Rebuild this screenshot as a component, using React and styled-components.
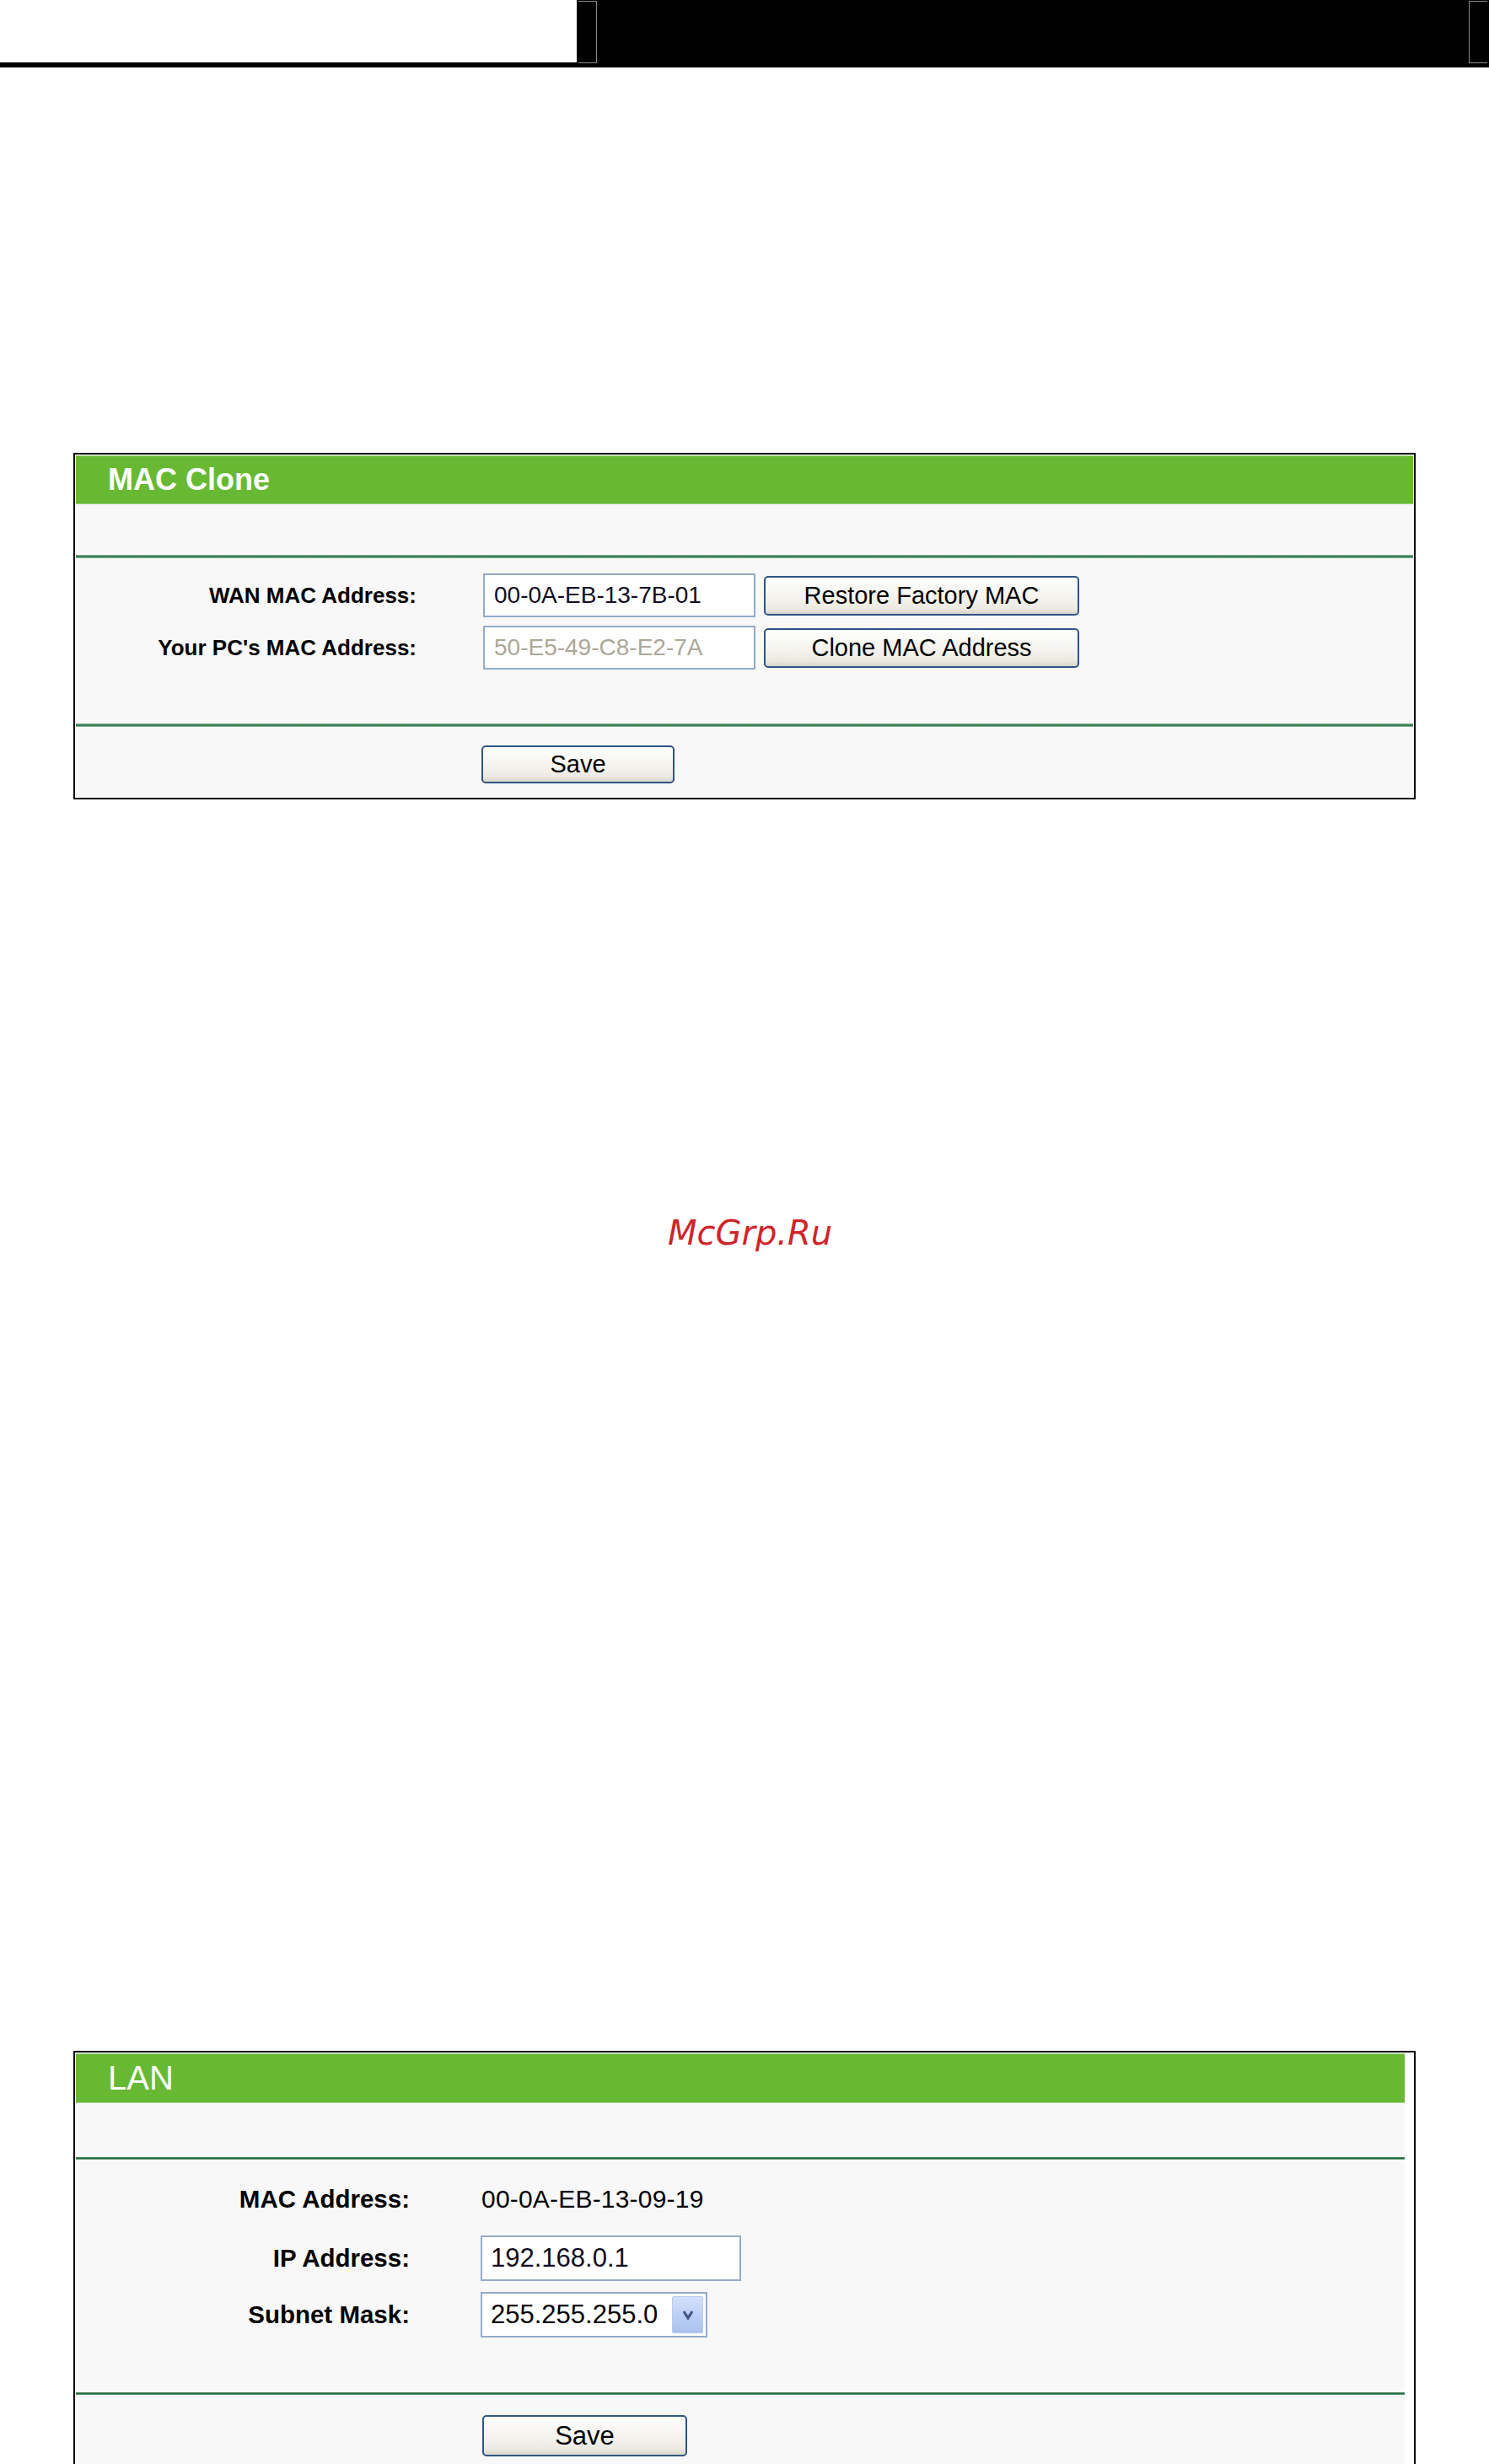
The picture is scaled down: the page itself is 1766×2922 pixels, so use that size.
import React from "react";
import styled, { createGlobalStyle } from "styled-components";

const GlobalStyle = createGlobalStyle`
  html, body {
    margin: 0;
    padding: 0;
    background: #fff;
  }
  body {
    font-family: "Liberation Sans", Arial, sans-serif;
    color: #000;
  }
`;

const Page = styled.div`
  width: 1766px;
  height: 2922px;
  overflow: hidden;
  background: #fff;
`;

// page header strip: white tab on the left, black band with bracket marks
const TopBar = styled.header`
  display: flex;
  height: 80px;
  background: #000;
`;

const TopTab = styled.div`
  width: 684px;
  height: 74px;
  background: #fff;
`;

const TopBand = styled.div`
  flex: 1;
  display: flex;
  justify-content: space-between;
  align-items: flex-start;
  padding: 1px 2px 0;
`;

const Bracket = styled.span`
  width: 21px;
  height: 72px;
  border: 1px solid #8a8a8a;
  border-${(p) => (p.$side === "left" ? "left" : "right")}: none;
`;

// settings panel
const Frame = styled.section`
  box-sizing: border-box;
  width: 1592px;
  margin: ${(p) => p.$top}px 0 0 87px;
  border: 2px solid #000;
  padding: 1px ${(p) => p.$inset}px 1px 1px;
  background: #fff;
`;

const Sheet = styled.div`
  background: #f8f8f8;
`;

const Header = styled.h2`
  margin: 0;
  height: ${(p) => p.$height}px;
  display: flex;
  align-items: center;
  padding-left: 38px;
  background: #67b934;
  box-shadow: inset 0 1px 0 #a6d78b, inset 0 -1px 0 #9ed283;
  color: #fff;
  font-size: ${(p) => p.$size}px;
  font-weight: ${(p) => (p.$bold ? 700 : 400)};
`;

const Spacer = styled.div`
  height: ${(p) => p.$h}px;
`;

const Divider = styled.div`
  height: ${(p) => (p.$thin ? 3 : 4)}px;
  background: ${(p) =>
    p.$thin
      ? "linear-gradient(#6f9f80, #1f6a3c 35%, #1f6a3c 65%, #8dbb9c)"
      : "linear-gradient(#a2c9ae, #3f7f59 30%, #3f7f59 70%, #a9cfb5)"};
`;

const Form = styled.div`
  display: flex;
  flex-direction: column;
  gap: ${(p) => p.$gap}px;
  padding: ${(p) => p.$pad};
`;

const Row = styled.div`
  display: flex;
  align-items: center;
  height: ${(p) => p.$h}px;
`;

const Label = styled.div`
  width: ${(p) => p.$w}px;
  text-align: right;
  font-weight: 700;
  font-size: ${(p) => p.$size}px;
`;

const Value = styled.div`
  margin-left: ${(p) => p.$gap}px;
  font-size: 30px;
  letter-spacing: 0.2px;
`;

const TextField = styled.input`
  box-sizing: border-box;
  margin: 0 0 0 ${(p) => p.$gap}px;
  width: ${(p) => p.$w}px;
  height: ${(p) => p.$h}px;
  padding: 0 0 0 ${(p) => p.$padL}px;
  border: 2px solid #93abc9;
  background: #fff;
  font-family: "Liberation Sans", Arial, sans-serif;
  font-size: ${(p) => p.$size}px;
  color: ${(p) => (p.disabled ? "#aca899" : "#120c20")};
  outline: none;
`;

const PushButton = styled.button`
  box-sizing: border-box;
  margin-left: ${(p) => p.$gap}px;
  width: ${(p) => p.$w}px;
  height: ${(p) => p.$h}px;
  padding: 0;
  border: 2px solid #2f5587;
  border-radius: 5px;
  background: linear-gradient(#ffffff, #f6f5f0 45%, #eceae2 85%, #d9d5c8);
  font-family: "Liberation Sans", Arial, sans-serif;
  font-size: ${(p) => p.$size}px;
  color: #000;
`;

const SaveRow = styled.div`
  padding: ${(p) => p.$pad};
`;

const SelectBox = styled.div`
  box-sizing: border-box;
  margin-left: 84px;
  width: 269px;
  height: 54px;
  display: flex;
  align-items: center;
  justify-content: space-between;
  padding: 0 3px 0 10px;
  border: 2px solid #93abc9;
  background: #fff;
  font-size: 31px;
`;

const DropButton = styled.span`
  box-sizing: border-box;
  width: 37px;
  height: 44px;
  display: flex;
  align-items: center;
  justify-content: center;
  border: 1px solid #b7c9ee;
  border-radius: 2px;
  background: linear-gradient(#d3e0fb, #b9cdf4 60%, #aac1ee);
`;

const Watermark = styled.div`
  margin: 494px 0 0 792px;
  height: 40px;
  line-height: 40px;
  font-family: "DejaVu Sans", sans-serif;
  font-style: italic;
  font-size: 40px;
  color: #d0242a;
`;

const Chevron = () => (
  <svg width="16" height="14" viewBox="0 0 16 14">
    <path d="M3 3 L8 11 L13 3" fill="none" stroke="#42578a" strokeWidth="3.2" />
  </svg>
);

export default function App() {
  return (
    <Page>
      <GlobalStyle />
      <TopBar>
        <TopTab />
        <TopBand>
          <Bracket $side="left" />
          <Bracket $side="right" />
        </TopBand>
      </TopBar>

      <Frame $top={457} $inset={1}>
        <Sheet>
          <Header $height={58} $size={36} $bold>
            MAC Clone
          </Header>
          <Spacer $h={60} />
          <Divider />
          <Form $gap={10} $pad="18px 0 64px">
            <Row $h={52}>
              <Label $w={404} $size={26}>WAN MAC Address:</Label>
              <TextField
                $gap={79}
                $w={323}
                $h={52}
                $padL={11}
                $size={28}
                defaultValue="00-0A-EB-13-7B-01"
              />
              <PushButton $gap={10} $w={374} $h={47} $size={29}>
                Restore Factory MAC
              </PushButton>
            </Row>
            <Row $h={52}>
              <Label $w={404} $size={26}>Your PC's MAC Address:</Label>
              <TextField
                $gap={79}
                $w={323}
                $h={52}
                $padL={11}
                $size={28}
                disabled
                defaultValue="50-E5-49-C8-E2-7A"
              />
              <PushButton $gap={10} $w={374} $h={47} $size={29}>
                Clone MAC Address
              </PushButton>
            </Row>
          </Form>
          <Divider />
          <SaveRow $pad="22px 0 16px">
            <PushButton $gap={481} $w={229} $h={45} $size={29}>
              Save
            </PushButton>
          </SaveRow>
        </Sheet>
      </Frame>

      <Watermark>McGrp.Ru</Watermark>

      <Frame $top={950} $inset={11}>
        <Sheet>
          <Header $height={59} $size={40}>
            LAN
          </Header>
          <Spacer $h={64} />
          <Divider $thin />
          <Form $gap={0} $pad="27px 0 65px">
            <Row $h={40}>
              <Label $w={396} $size={29.5}>MAC Address:</Label>
              <Value $gap={85}>00-0A-EB-13-09-19</Value>
            </Row>
            <Spacer $h={23} />
            <Row $h={54}>
              <Label $w={396} $size={29.5}>IP Address:</Label>
              <TextField
                $gap={84}
                $w={309}
                $h={54}
                $padL={10}
                $size={31}
                defaultValue="192.168.0.1"
              />
            </Row>
            <Spacer $h={13} />
            <Row $h={54}>
              <Label $w={396} $size={29.5}>Subnet Mask:</Label>
              <SelectBox>
                <span>255.255.255.0</span>
                <DropButton>
                  <Chevron />
                </DropButton>
              </SelectBox>
            </Row>
          </Form>
          <Divider $thin />
          <SaveRow $pad="24px 0 20px">
            <PushButton $gap={482} $w={243} $h={49} $size={31}>
              Save
            </PushButton>
          </SaveRow>
        </Sheet>
      </Frame>
    </Page>
  );
}
